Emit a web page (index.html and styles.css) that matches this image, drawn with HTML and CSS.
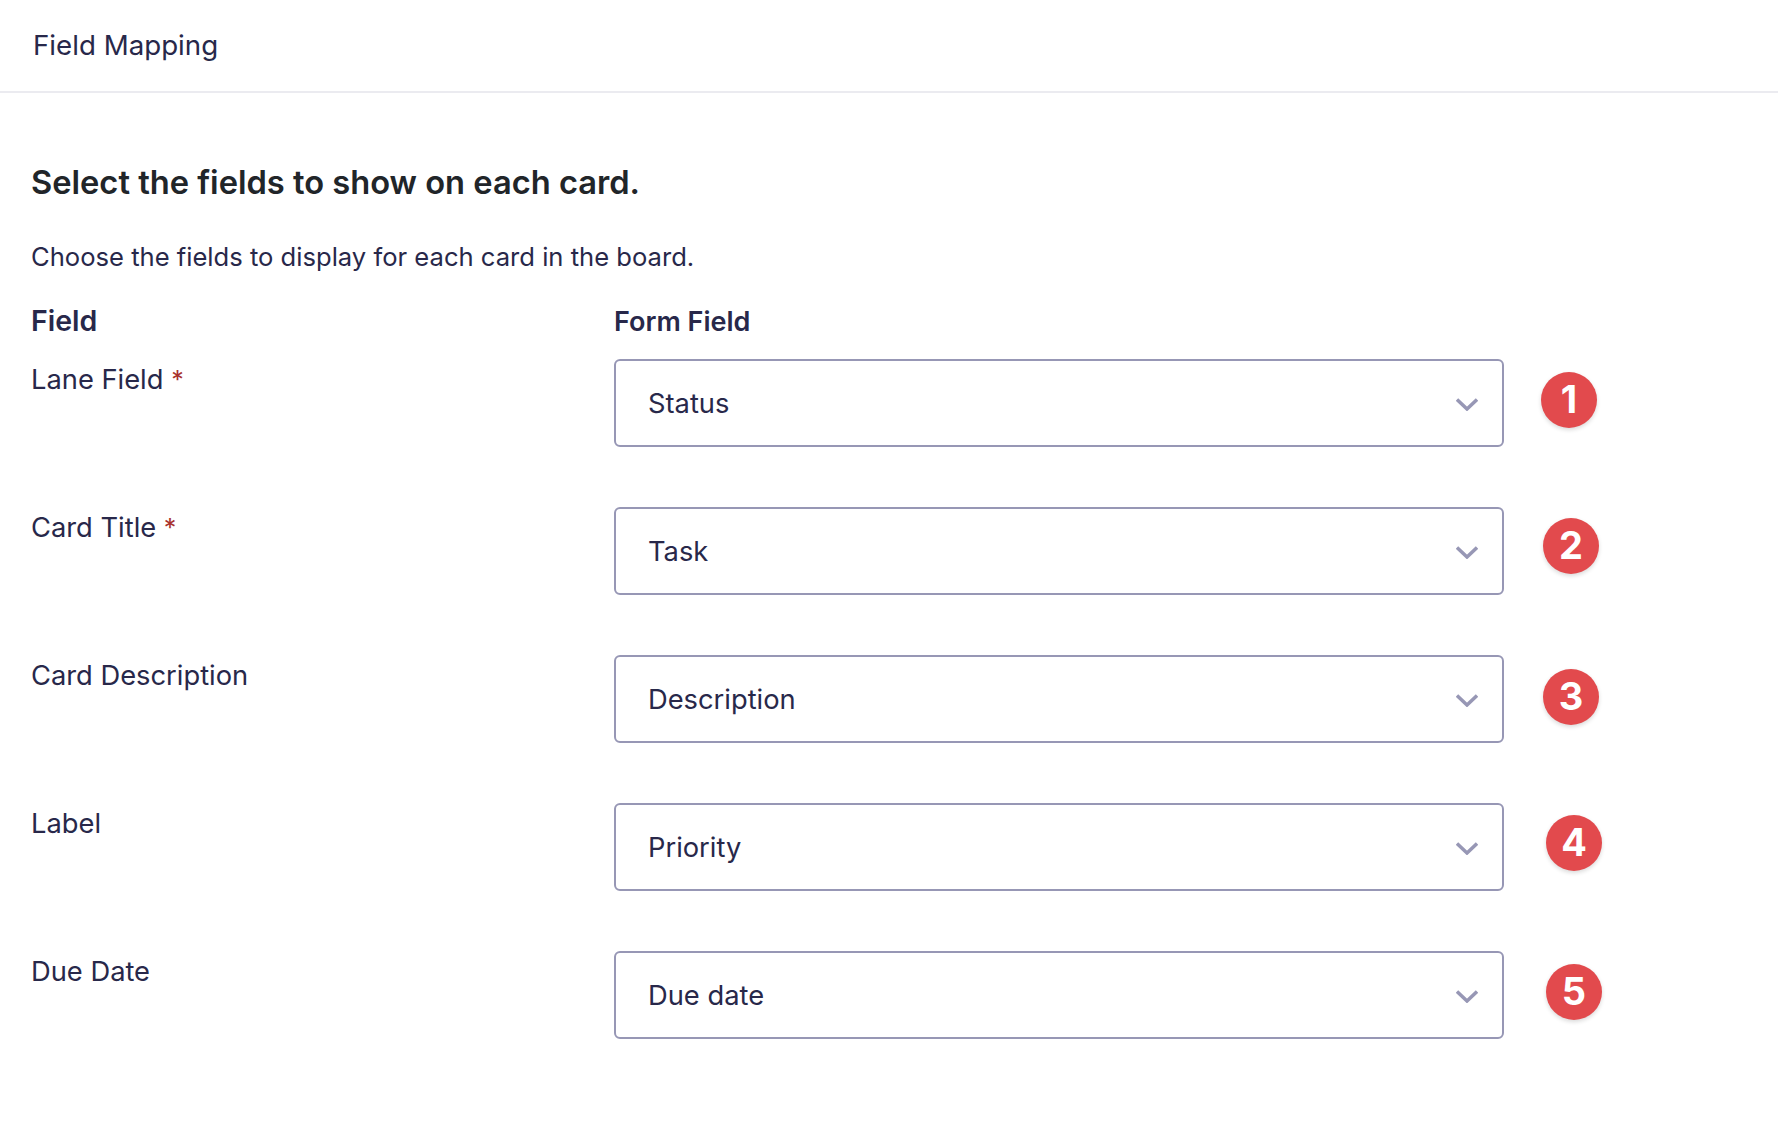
FILE: index.html
```html
<!DOCTYPE html>
<html>
  <head>
    <meta charset="UTF-8">
    <title>Field Mapping</title>
    <link rel="stylesheet" href="styles.css">
  </head>
  <body>
    <div class="header">Field Mapping</div>
    <div class="content">
      <h2>Select the fields to show on each card.</h2>
      <p class="desc">Choose the fields to display for each card in the board.</p>
      <div class="grid">
        <div class="col-head field-head">Field</div>
        <div class="col-head">Form Field</div>

        <div class="label">Lane Field <span class="req">*</span></div>
        <div class="select">
          <span>Status</span>
          <svg class="chevron" viewBox="0 0 22 13"><path d="M1 1.5l10 9.5 10-9.5"/></svg>
        </div>

        <div class="label">Card Title <span class="req">*</span></div>
        <div class="select">
          <span>Task</span>
          <svg class="chevron" viewBox="0 0 22 13"><path d="M1 1.5l10 9.5 10-9.5"/></svg>
        </div>

        <div class="label">Card Description</div>
        <div class="select">
          <span>Description</span>
          <svg class="chevron" viewBox="0 0 22 13"><path d="M1 1.5l10 9.5 10-9.5"/></svg>
        </div>

        <div class="label">Label</div>
        <div class="select">
          <span>Priority</span>
          <svg class="chevron" viewBox="0 0 22 13"><path d="M1 1.5l10 9.5 10-9.5"/></svg>
        </div>

        <div class="label">Due Date</div>
        <div class="select">
          <span>Due date</span>
          <svg class="chevron" viewBox="0 0 22 13"><path d="M1 1.5l10 9.5 10-9.5"/></svg>
        </div>
      </div>
    </div>

    <div class="badge badge-1">1</div>
    <div class="badge badge-2">2</div>
    <div class="badge badge-3">3</div>
    <div class="badge badge-4">4</div>
    <div class="badge badge-5">5</div>
  </body>
</html>
```

FILE: styles.css
```css
body { background: #fff; color: #28284a; font-family: Inter, "Liberation Sans", sans-serif; font-size: 27px; margin: 0; position: relative }
h2 { color: #212529; font-size: 32.65px; font-weight: 600; line-height: 40px; margin: 0 }

.header { border-bottom: 2px solid #ebebf0; box-sizing: border-box; font-size: 27.7px; height: 93px; line-height: 90px; padding-left: 33px }
.content { padding: 69px 0 0 31px }
.desc { font-size: 25.6px; line-height: 36px; margin: 37px 0 0 }
.grid { display: grid; grid-template-columns: 583px 890px; margin-top: 29px }
.col-head { font-size: 27px; font-weight: 600; line-height: 36px; margin-bottom: 19px }
.field-head { font-size: 28.5px; line-height: 34px }
.label { font-size: 27.3px; line-height: 36px; padding-top: 3px }
.req { color: #a8322d; font-size: 25px }
.select { align-items: center; border: 2px solid #9797b5; border-radius: 6px; box-sizing: border-box; display: flex; font-size: 27.3px; height: 88px; justify-content: space-between; margin-bottom: 60px; padding: 0 24px 0 32px }
.chevron { fill: none; height: 13px; margin-top: 3px; stroke: #9797b5; stroke-width: 3.5; width: 22px }

.badge { align-items: center; background: #e24a4d; border-radius: 50%; box-shadow: 0 2px 4px rgba(0, 0, 0, 0.15); box-sizing: border-box; color: #fff; display: flex; font-size: 38px; font-weight: 700; height: 56px; justify-content: center; padding-bottom: 3px; position: absolute; width: 56px }
.badge-1 { left: 1541px; top: 372px }
.badge-2 { left: 1543px; top: 518px }
.badge-3 { left: 1543px; top: 669px }
.badge-4 { left: 1546px; top: 815px }
.badge-5 { left: 1546px; top: 964px }
```
